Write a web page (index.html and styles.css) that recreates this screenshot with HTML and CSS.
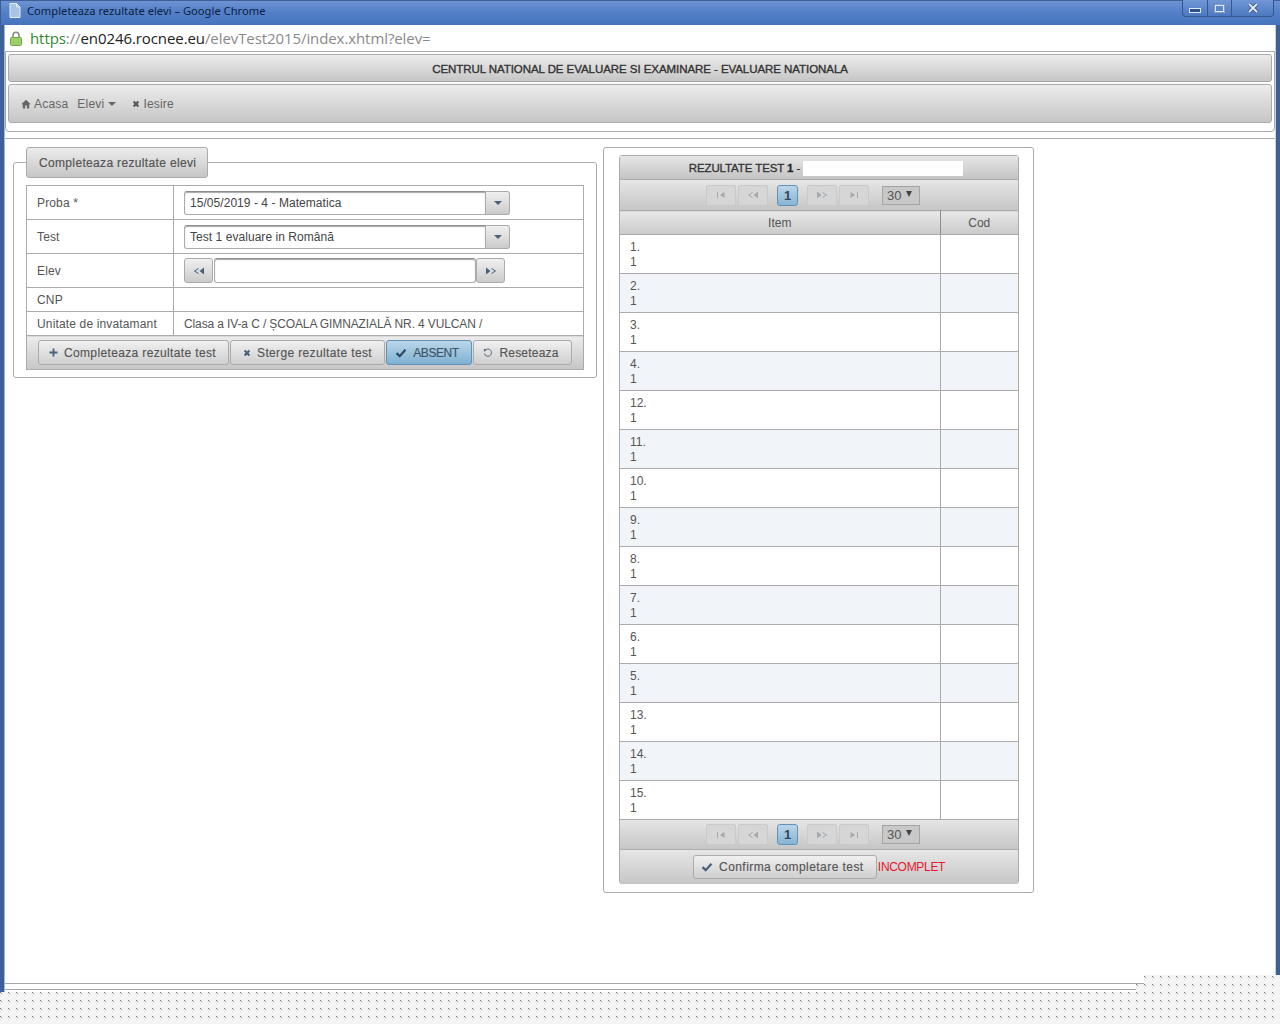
FILE: index.html
```html
<!DOCTYPE html>
<html lang="ro">
<head>
<meta charset="utf-8">
<title>Completeaza rezultate elevi</title>
<link rel="stylesheet" href="styles.css">
</head>
<body>
<svg class="sprite" width="0" height="0" aria-hidden="true">
  <symbol id="i-close" viewBox="0 0 10 10"><path d="M2 2l6 6M8 2l-6 6" fill="none" stroke="currentColor" stroke-width="2.600"/></symbol>
  <symbol id="i-check" viewBox="0 0 12 10"><path d="M1.500 5.200l3.200 3L10.500 1.800" fill="none" stroke="currentColor" stroke-width="2.300"/></symbol>
  <symbol id="i-first" viewBox="0 0 10 8"><path d="M1.500 1v6" stroke="currentColor" fill="none"/><path d="M8.500 1L4 4l4.500 3z" fill="currentColor"/></symbol>
  <symbol id="i-prev" viewBox="0 0 12 8"><path d="M11 .5L6.500 4l4.500 3.500z" fill="currentColor"/><path d="M5.500 1.500L1.500 4l4 2.500" fill="none" stroke="currentColor"/></symbol>
  <symbol id="i-next" viewBox="0 0 12 8"><path d="M1 .5L5.500 4 1 7.500z" fill="currentColor"/><path d="M6.500 1.500L10.500 4l-4 2.500" fill="none" stroke="currentColor"/></symbol>
  <symbol id="i-last" viewBox="0 0 10 8"><path d="M8.500 1v6" stroke="currentColor" fill="none"/><path d="M1.500 1L6 4 1.500 7z" fill="currentColor"/></symbol>
</svg>

<div class="titlebar">
  <svg class="doc-icon" width="12" height="15" viewBox="0 0 12 15"><path d="M1 .5h6.500L11 4v10.500H1z" fill="#a9c3e6" stroke="#e4ecf6"/><path d="M7.500.5V4H11" fill="none" stroke="#e4ecf6"/></svg>
  <span class="title-text">Completeaza rezultate elevi – Google Chrome</span>
  <div class="win-controls">
    <span class="win-btn win-min"><svg width="12" height="6" viewBox="0 0 12 6"><rect x=".5" y=".5" width="11" height="4" fill="#2f4f86" stroke="#dfe8f6"/></svg></span>
    <span class="win-btn win-max"><svg width="11" height="9" viewBox="0 0 11 9"><rect x="1" y="1" width="9" height="7" fill="none" stroke="#dfe8f6" stroke-width="2"/><rect x=".5" y=".5" width="10" height="8" fill="none" stroke="#2f4f86" stroke-width=".5"/></svg></span>
    <span class="win-btn win-close"><svg width="12" height="10" viewBox="0 0 12 10"><path d="M2 1l8 8M10 1L2 9" stroke="#2f4f86" stroke-width="3.400" fill="none"/><path d="M2 1l8 8M10 1L2 9" stroke="#e6edf8" stroke-width="1.800" fill="none"/></svg></span>
  </div>
</div>

<div class="urlbar">
  <svg class="lock" width="12" height="15" viewBox="0 0 12 15"><path d="M3 7V4.200a3 3 0 0 1 6 0V7" fill="none" stroke="#8a8f86" stroke-width="1.600"/><rect x=".5" y="6.500" width="11" height="8" rx="1" fill="#9ad06a" stroke="#6fa845"/></svg>
  <span class="url"><span class="url-https">https</span><span class="url-grey">://</span><span class="url-host">en0246.rocnee.eu</span><span class="url-grey">/elevTest2015/index.xhtml?elev=</span></span>
</div>

<div class="page">
  <div class="top-box">
    <div class="app-header">CENTRUL NATIONAL DE EVALUARE SI EXAMINARE - EVALUARE NATIONALA</div>
    <nav class="menubar">
      <span class="menu-item menu-home"><svg width="10" height="10" viewBox="0 0 10 10"><path d="M5 .8L.3 5.200h1.500V9.500h2.300V6.500h1.800v3h2.300V5.200h1.500z" fill="#666"/></svg>Acasa</span>
      <span class="menu-item menu-elevi">Elevi<i class="caret"></i></span>
      <span class="menu-item menu-exit"><svg class="ico-x" width="8" height="8"><use href="#i-close"/></svg>Iesire</span>
    </nav>
  </div>

  <main class="content">
    <fieldset class="form-set">
      <legend class="form-legend">Completeaza rezultate elevi</legend>
      <table class="form-table">
        <tr class="row-34">
          <td class="lbl">Proba *</td>
          <td class="val"><div class="select"><span class="select-label">15/05/2019 - 4 - Matematica</span><span class="select-trigger"><i class="caret caret-dark"></i></span></div></td>
        </tr>
        <tr class="row-34">
          <td class="lbl">Test</td>
          <td class="val"><div class="select"><span class="select-label">Test 1 evaluare in Română</span><span class="select-trigger"><i class="caret caret-dark"></i></span></div></td>
        </tr>
        <tr class="row-34">
          <td class="lbl">Elev</td>
          <td class="val"><div class="elev-row">
            <span class="step-btn"><svg width="12" height="8"><use href="#i-prev"/></svg></span>
            <span class="elev-input"></span>
            <span class="step-btn"><svg width="12" height="8"><use href="#i-next"/></svg></span>
          </div></td>
        </tr>
        <tr class="row-24"><td class="lbl">CNP</td><td class="val"></td></tr>
        <tr class="row-24"><td class="lbl">Unitate de invatamant</td><td class="val val-school">Clasa a IV-a C / ȘCOALA GIMNAZIALĂ NR. 4 VULCAN /</td></tr>
        <tr><td colspan="2" class="actions-cell"><div class="actions">
          <button class="btn btn-add"><svg width="9" height="9" viewBox="0 0 9 9"><path d="M4.500 .5v8M.5 4.500h8" stroke="currentColor" stroke-width="1.800" fill="none"/></svg>Completeaza rezultate test</button>
          <button class="btn btn-del"><svg width="8" height="8"><use href="#i-close"/></svg>Sterge rezultate test</button>
          <button class="btn btn-active btn-absent"><svg width="12" height="10"><use href="#i-check"/></svg>ABSENT</button>
          <button class="btn btn-reset"><svg width="10" height="10" viewBox="0 0 10 10"><path d="M2 2.500A3.600 3.600 0 1 1 1.400 5.500" fill="none" stroke="currentColor"/><path d="M.5 1l3.200.2L1.500 4z" fill="currentColor"/></svg>Reseteaza</button>
        </div></td></tr>
      </table>
    </fieldset>

    <section class="result-panel">
      <div class="result-table">
        <div class="result-title"><span>REZULTATE TEST <b>1</b> -&nbsp;</span><span class="redacted"></span></div>
        <div class="pager">
          <span class="pg"><svg width="10" height="8"><use href="#i-first"/></svg></span>
          <span class="pg"><svg width="12" height="8"><use href="#i-prev"/></svg></span>
          <span class="pg-cur">1</span>
          <span class="pg"><svg width="12" height="8"><use href="#i-next"/></svg></span>
          <span class="pg"><svg width="10" height="8"><use href="#i-last"/></svg></span>
          <span class="pg-size">30<i class="tri"></i></span>
        </div>
        <table class="items">
          <thead><tr><th class="col-item">Item</th><th class="col-cod">Cod</th></tr></thead>
          <tbody>
            <tr><td>1.<br>1</td><td></td></tr>
            <tr><td>2.<br>1</td><td></td></tr>
            <tr><td>3.<br>1</td><td></td></tr>
            <tr><td>4.<br>1</td><td></td></tr>
            <tr><td>12.<br>1</td><td></td></tr>
            <tr><td>11.<br>1</td><td></td></tr>
            <tr><td>10.<br>1</td><td></td></tr>
            <tr><td>9.<br>1</td><td></td></tr>
            <tr><td>8.<br>1</td><td></td></tr>
            <tr><td>7.<br>1</td><td></td></tr>
            <tr><td>6.<br>1</td><td></td></tr>
            <tr><td>5.<br>1</td><td></td></tr>
            <tr><td>13.<br>1</td><td></td></tr>
            <tr><td>14.<br>1</td><td></td></tr>
            <tr><td>15.<br>1</td><td></td></tr>
          </tbody>
        </table>
        <div class="pager pager-bottom">
          <span class="pg"><svg width="10" height="8"><use href="#i-first"/></svg></span>
          <span class="pg"><svg width="12" height="8"><use href="#i-prev"/></svg></span>
          <span class="pg-cur">1</span>
          <span class="pg"><svg width="12" height="8"><use href="#i-next"/></svg></span>
          <span class="pg"><svg width="10" height="8"><use href="#i-last"/></svg></span>
          <span class="pg-size">30<i class="tri"></i></span>
        </div>
        <div class="result-foot">
          <button class="btn btn-confirm"><svg width="12" height="10"><use href="#i-check"/></svg>Confirma completare test</button><span class="incomplete">INCOMPLET</span>
        </div>
      </div>
    </section>
  </main>
</div>
<div class="page-foot foot-top"></div>
<div class="page-foot foot-bottom"></div>
</body>
</html>
```

FILE: styles.css
```css
* { box-sizing: border-box; }

html, body { height: 100%; }

body {
  margin: 0;
  height: 1024px;
  overflow: hidden;
  font-family: "Liberation Sans", Arial, sans-serif;
  font-size: 12px;
  color: #4e4e4e;
  background-color: #f4f4f4;
  background-image:
    conic-gradient(from 270deg at 1px 1px, #6e6e6e 25%, transparent 25%),
    conic-gradient(from 270deg at 1px 1px, #a0a0a0 25%, transparent 25%);
  background-size: 8px 8px;
  background-position: 0 0, 1px 1px;
}

.sprite { position: absolute; }

.titlebar {
  display: flex;
  align-items: center;
  height: 25px;
  padding: 0 6px 5px 8px;
  background: linear-gradient(#6d93d3, #5480c8 45%, #4574bd);
  border-top: 1px solid #3f5f96;
  border-left: 1px solid #3c5c92;
}

.doc-icon { flex: none; margin-right: 6px; }

.title-text {
  font-family: "Noto Sans", "Open Sans", sans-serif;
  font-size: 11.200px;
  color: #0b1e3f;
}

.win-controls {
  display: flex;
  margin-left: auto;
  align-self: flex-start;
  height: 17px;
  margin-top: -1px;
  border: 1px solid #37568c;
  border-top: 0;
  border-radius: 0 0 4px 4px;
  background: linear-gradient(#7097d6, #4c78c0);
}

.win-btn { display: flex; align-items: center; justify-content: center; border-right: 1px solid #37568c; }
.win-btn:last-child { border-right: 0; }
.win-min { width: 25px; padding-top: 5px; }
.win-max { width: 24px; }
.win-close { width: 41px; }

.urlbar, .page {
  background: #fff;
  border-left: 4px solid #3d6099;
  border-right: 4px solid #3d6099;
  padding-left: 1px;
  padding-right: 1px;
  box-shadow: inset 1px 0 #9fb6da, inset -1px 0 #c4d2e8;
}

.urlbar {
  display: flex;
  align-items: center;
  height: 26px;
  padding: 0 1px 0 6px;
  gap: 8px;
}

.lock { flex: none; }

.url {
  font-family: "Open Sans", "Noto Sans", sans-serif;
  font-size: 15px;
  letter-spacing: -.085px;
}
.url-https { color: #2f8a2f; }
.url-grey { color: #8a8a8a; }
.url-host { color: #222; }

.page {
  height: 924px;
  display: flex;
  flex-direction: column;
}

.top-box {
  height: 81px;
  padding: 2px 2px 0;
  margin-bottom: 6px;
  border: 1px solid #ababab;
  border-radius: 0 0 4px 4px;
  flex: none;
}

.app-header, .menubar {
  background: linear-gradient(#ececec, #c6c6c6);
  border: 1px solid #ababab;
  border-radius: 3px;
}

.app-header {
  height: 28px;
  line-height: 28px;
  text-align: center;
  font-size: 11.500px;
  color: #333;
  letter-spacing: -.06px;
  -webkit-text-stroke: .35px #333;
}

.menubar {
  display: flex;
  align-items: center;
  height: 39px;
  margin-top: 2px;
  padding-left: 12px;
  color: #666;
  letter-spacing: .2px;
}

.menu-item { display: inline-flex; align-items: center; }
.menu-home svg { margin-right: 3px; }
.menu-elevi { margin-left: 9px; }
.menu-exit { margin-left: 16px; }
.ico-x { margin-right: 3px; color: #555; }

.caret {
  display: inline-block;
  width: 0;
  height: 0;
  margin-left: 4px;
  border-left: 4px solid transparent;
  border-right: 4px solid transparent;
  border-top: 4px solid #666;
}
.caret-dark { margin: 0; border-top-color: #4a6076; }

.content {
  flex: 1;
  display: flex;
  align-items: flex-start;
  gap: 6px;
  padding: 8px 0 0 8px;
  border-top: 1px solid #ababab;
}

.form-set {
  flex: none;
  width: 584px;
  height: 231px;
  min-width: 0;
  margin: 0;
  padding: 7px 12px 0;
  border: 1px solid #ababab;
  border-radius: 3px;
}

.form-legend {
  width: 182px;
  height: 31px;
  padding: 0 0 0 12px;
  line-height: 30px;
  color: #555;
  letter-spacing: .34px;
  -webkit-text-stroke: .2px #555;
  background: linear-gradient(#ececec, #c6c6c6);
  border: 1px solid #ababab;
  border-radius: 3px;
}

.form-table {
  width: 558px;
  border-collapse: collapse;
  table-layout: fixed;
}

.form-table td {
  border: 1px solid #ababab;
  padding: 0 10px;
  color: #555;
}

.form-table .lbl { width: 147px; letter-spacing: .15px; }
.form-table .val-school { letter-spacing: -.12px; }
.row-34 { height: 34px; }
.row-24 { height: 24px; }

.select {
  display: flex;
  width: 326px;
  height: 24px;
}

.select-label {
  flex: 1;
  padding-left: 5px;
  line-height: 22px;
  letter-spacing: .05px;
  color: #444;
  background: #fff;
  border: 1px solid #ababab;
  border-top-color: #8e8e8e;
  box-shadow: inset 0 1px 1px #a8a8a8;
  border-radius: 3px 0 0 3px;
}

.select-trigger {
  flex: none;
  display: flex;
  align-items: center;
  justify-content: center;
  width: 24px;
  background: linear-gradient(#f0f0f0, #cbcbcb);
  border: 1px solid #ababab;
  border-left: 0;
  border-radius: 0 3px 3px 0;
}

.elev-row { display: flex; height: 25px; }

.step-btn {
  flex: none;
  display: flex;
  align-items: center;
  justify-content: center;
  width: 29px;
  color: #48607a;
  background: linear-gradient(#f0f0f0, #cbcbcb);
  border: 1px solid #ababab;
  border-radius: 3px;
}

.elev-input {
  width: 262px;
  margin-left: 1px;
  background: #fff;
  border: 1px solid #ababab;
  border-top-color: #8e8e8e;
  box-shadow: inset 0 1px 1px #a8a8a8;
  border-radius: 3px;
}

.form-table .actions-cell {
  height: 34px;
  padding: 0 0 0 11px;
  background: linear-gradient(#ececec, #c6c6c6);
}

.actions { display: flex; gap: 1px; height: 25px; }

.btn {
  display: inline-flex;
  align-items: center;
  justify-content: center;
  height: 25px;
  margin: 0;
  padding: 0;
  font: inherit;
  color: #555;
  letter-spacing: .36px;
  -webkit-text-stroke: .15px #555;
  background: linear-gradient(#f0f0f0, #cfcfcf);
  border: 1px solid #ababab;
  border-radius: 3px;
}
.btn svg { margin-right: 6px; color: #48607a; }

.btn-add { width: 191px; padding-right: 2px; }
.btn-del { width: 155px; }
.btn-absent { width: 86px; letter-spacing: -.4px; padding-right: 4px; }
.btn-reset { width: 99px; letter-spacing: .2px; padding-right: 3px; }
.btn-reset svg { color: #5a6a7a; }

.btn-active {
  color: #3c5468;
  -webkit-text-stroke-color: #3c5468;
  background: linear-gradient(#bcd6e8, #7fb1d2);
  border-color: #5f93b8;
}
.btn-active svg { color: #2c4a66; }

.result-panel {
  flex: none;
  width: 431px;
  height: 746px;
  padding: 7px 0 0 15px;
  border: 1px solid #ababab;
  border-radius: 3px;
}

.result-table {
  width: 400px;
  height: 729px;
  border: 1px solid #ababab;
  border-radius: 3px;
}

.result-title {
  display: flex;
  align-items: center;
  justify-content: center;
  height: 24px;
  padding: 1px 0 0 14px;
  font-size: 11.500px;
  color: #333;
  letter-spacing: -.1px;
  -webkit-text-stroke: .3px #333;
  background: linear-gradient(#e6e6e6, #c4c4c4);
  border-bottom: 1px solid #ababab;
}
.result-title b { color: #222; }

.redacted { width: 160px; height: 15px; background: #fff; }

.pager {
  display: flex;
  align-items: center;
  justify-content: center;
  height: 30px;
  padding-right: 12px;
  background: linear-gradient(#e6e6e6, #c6c6c6);
}

.pg {
  display: flex;
  align-items: center;
  justify-content: center;
  width: 30px;
  height: 21px;
  margin-right: 2px;
  color: #a4a9ae;
  background: #d6d6d6;
  border: 1px solid #cacaca;
  border-radius: 2px;
}

.pg-cur {
  width: 21px;
  height: 21px;
  margin: 0 9px 0 7px;
  text-align: center;
  line-height: 19px;
  font-size: 13px;
  font-weight: bold;
  color: #33485e;
  background: linear-gradient(#bcd6e8, #86b5d4);
  border: 1px solid #5f93b8;
  border-radius: 3px;
}

.pg-size {
  display: inline-flex;
  align-items: center;
  width: 38px;
  height: 19px;
  margin-left: 11px;
  padding-left: 4px;
  color: #555;
  background: #c8c8c8;
  border: 1px solid #a4a4a4;
  font-size: 13px;
}

.tri {
  width: 0;
  height: 0;
  margin: -3px 0 0 5px;
  border-left: 3.500px solid transparent;
  border-right: 3.500px solid transparent;
  border-top: 6px solid #444;
}

.items {
  width: 398px;
  border-collapse: collapse;
  table-layout: fixed;
}

.items th {
  height: 24px;
  padding: 0;
  font-weight: normal;
  color: #555;
  background: linear-gradient(#e8e8e8, #cacaca);
  border-top: 1px solid #ababab;
  border-bottom: 1px solid #ababab;
}
.col-item { width: 320px; border-right: 1px solid #8f8f8f; }

.items td {
  height: 39px;
  padding: 1px 0 0 10px;
  line-height: 15px;
  color: #555;
  border-bottom: 1px solid #ababab;
}
.items td:first-child { border-right: 1px solid #ababab; }
.items tbody tr:nth-child(even) { background: #f1f5f9; }

.pager-bottom { border-bottom: 1px solid #ababab; }

.result-foot {
  display: flex;
  align-items: center;
  justify-content: center;
  height: 34px;
  background: linear-gradient(#e6e6e6, #c6c6c6);
  border-radius: 0 0 3px 3px;
}

.btn-confirm { width: 184px; height: 24px; letter-spacing: .44px; padding-right: 5px; }

.incomplete { margin-left: 1px; color: #e8172b; letter-spacing: -.3px; }

.page-foot {
  border-left: 4px solid #3d6099;
  box-shadow: inset 1px 0 #9fb6da;
}

.foot-top {
  width: 1144px;
  height: 9px;
  background: linear-gradient(#fff 8px, #a8a8a8 8px);
}

.foot-bottom {
  width: 1136px;
  height: 8px;
  background: linear-gradient(#fff 5px, #a8a8a8 5px, #a8a8a8 6px, #fff 6px);
}
```
